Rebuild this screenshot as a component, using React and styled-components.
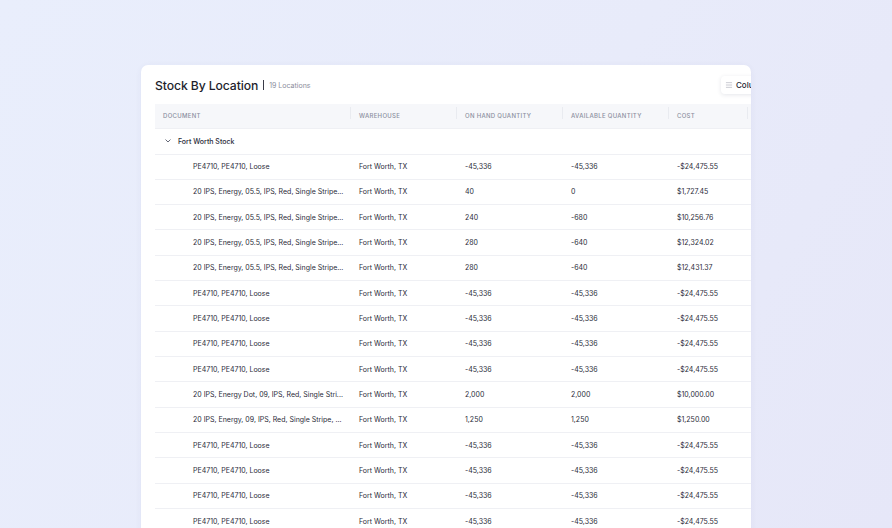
import React from 'react'
import styled, { createGlobalStyle } from 'styled-components'
import { Menu } from 'lucide-react'

const GlobalStyle = createGlobalStyle`
  html, body {
    margin: 0;
    padding: 0;
  }
  body {
    font-family: Inter, "Noto Sans", sans-serif;
    color: #262736;
  }
`

const Page = styled.div`
  width: 892px;
  height: 528px;
  overflow: hidden;
  background: linear-gradient(120deg, #e9eefc 0%, #e8ebfa 55%, #e6e7f8 100%);
  padding: 65px 0 0 141px;
  box-sizing: border-box;
`

const Card = styled.div`
  width: 610px;
  height: 500px;
  background: #fff;
  border-radius: 7px;
  box-shadow: 0 1px 6px rgba(60, 70, 120, 0.06);
  overflow: hidden;
`

const Inner = styled.div`
  width: 627px;
  padding-left: 14px;
`

const Toolbar = styled.div`
  height: 38.5px;
  display: flex;
  align-items: center;
  justify-content: space-between;
  padding-top: 2px;
  box-sizing: border-box;
`

const TitleGroup = styled.div`
  display: flex;
  align-items: center;
  gap: 5px;
`

const Title = styled.h1`
  margin: 0;
  font-size: 12.2px;
  font-weight: 500;
  color: #1d1e2c;
  letter-spacing: -0.1px;
`

const Divider = styled.span`
  width: 1px;
  height: 10px;
  background: #3a3b48;
`

const Count = styled.span`
  font-size: 7px;
  color: #8a8d9c;
`

const ColumnsButton = styled.button`
  display: flex;
  align-items: center;
  gap: 3px;
  width: 62px;
  height: 18px;
  padding: 0 0 0 4px;
  margin-right: -1px;
  border: none;
  border-radius: 4px;
  background: #fff;
  box-shadow: 0 1px 4px rgba(40, 50, 90, 0.12);
  font-family: inherit;
  font-size: 8px;
  font-weight: 500;
  color: #262736;
  svg {
    color: #9a9dab;
  }
`

const Row = styled.div`
  display: grid;
  grid-template-columns: 196px 106px 106px 106px 79px 1fr;
  height: ${p => p.$h || 25.33}px;
  align-items: center;
  background: ${p => (p.$head ? '#f6f7fa' : '#fff')};
  border-bottom: 1px solid #eff0f4;
  box-sizing: border-box;
`

const HeadCell = styled.div`
  position: relative;
  padding-left: 8px;
  font-size: 6px;
  font-weight: 500;
  letter-spacing: 0.3px;
  text-transform: uppercase;
  color: #8b8fa0;
  &::after {
    content: '';
    position: absolute;
    right: 0;
    top: -5px;
    width: 1px;
    height: 12px;
    background: #e9ebf0;
  }
`

const Cell = styled.div`
  padding-left: ${p => p.$indent || 8}px;
  font-size: 7px;
  color: #2a2b39;
  white-space: nowrap;
  overflow: hidden;
`

const GroupCell = styled.div`
  grid-column: 1 / -1;
  display: flex;
  align-items: center;
  gap: 7px;
  padding-left: 10px;
  font-size: 7px;
  font-weight: 500;
  color: #2a2b39;
`

const Chevron = () => (
  <svg width="6" height="4" viewBox="0 0 6 4" fill="none">
    <path d="M0.8 0.8 L3 3 L5.2 0.8" stroke="#555868" strokeWidth="0.9" strokeLinecap="round" strokeLinejoin="round" />
  </svg>
)

const pe = ['PE4710, PE4710, Loose', '-45,336', '-45,336', '-$24,475.55']
const ips = '20 IPS, Energy, 05.5, IPS, Red, Single Stripe...'

const rows = [
  pe,
  [ips, '40', '0', '$1,727.45'],
  [ips, '240', '-680', '$10,256.76'],
  [ips, '280', '-640', '$12,324.02'],
  [ips, '280', '-640', '$12,431.37'],
  pe, pe, pe, pe,
  ['20 IPS, Energy Dot, 09, IPS, Red, Single Stri...', '2,000', '2,000', '$10,000.00'],
  ['20 IPS, Energy, 09, IPS, Red, Single Stripe, ...', '1,250', '1,250', '$1,250.00'],
  pe, pe, pe, pe, pe,
]

const headers = ['Document', 'Warehouse', 'On Hand Quantity', 'Available Quantity', 'Cost', '']

export default function App() {
  return (
    <>
      <GlobalStyle />
      <Page>
        <Card>
          <Inner>
            <Toolbar>
              <TitleGroup>
                <Title>Stock By Location</Title>
                <Divider />
                <Count>19 Locations</Count>
              </TitleGroup>
              <ColumnsButton>
                <Menu size={8} strokeWidth={1.6} />
                Columns
              </ColumnsButton>
            </Toolbar>
            <Row $head $h={25}>
              {headers.map((h, i) => (
                <HeadCell key={i}>{h}</HeadCell>
              ))}
            </Row>
            <Row $h={26}>
              <GroupCell>
                <Chevron />
                Fort Worth Stock
              </GroupCell>
            </Row>
            {rows.map((r, i) => (
              <Row key={i}>
                <Cell $indent={38}>{r[0]}</Cell>
                <Cell>Fort Worth, TX</Cell>
                <Cell>{r[1]}</Cell>
                <Cell>{r[2]}</Cell>
                <Cell>{r[3]}</Cell>
                <Cell />
              </Row>
            ))}
          </Inner>
        </Card>
      </Page>
    </>
  )
}
